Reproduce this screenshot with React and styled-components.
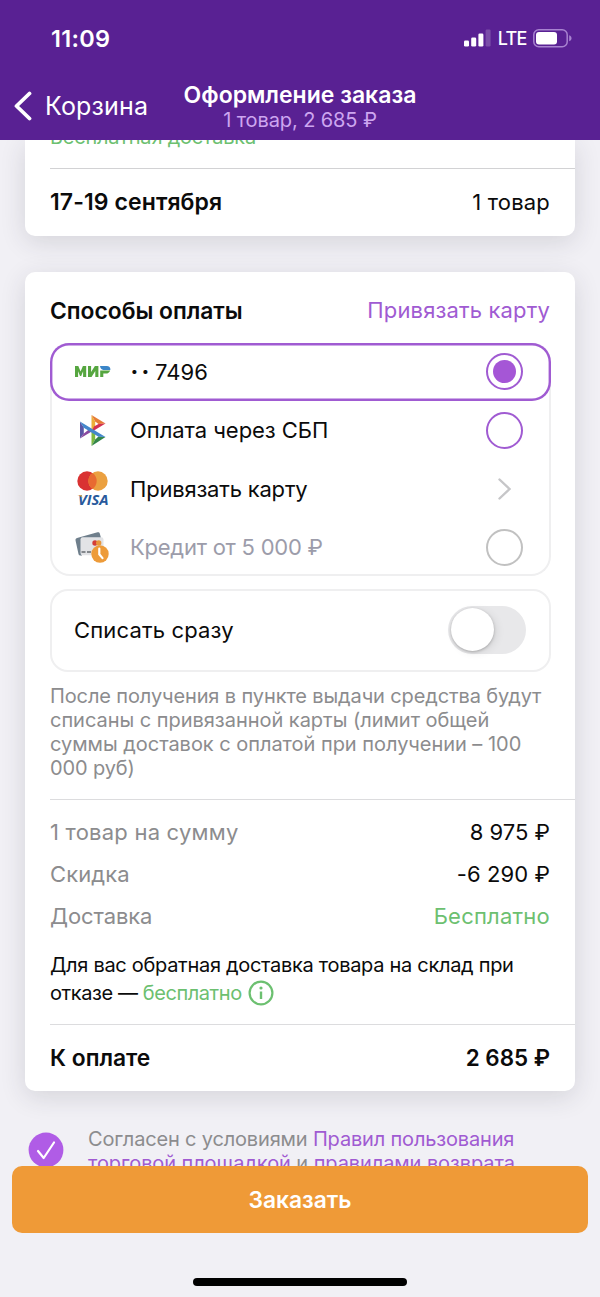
import styled, { createGlobalStyle } from "styled-components"
import { useState } from "react"

export default function App() {
    const [payment, setPayment] = useState("mir")
    const [chargeNow, setChargeNow] = useState(false)

    return (
        <Page>
            <GlobalStyle />
            <Header>
                <StatusBar>
                    <Text $size={23.5} $weight={600} $spacing={0.3}>11:09</Text>
                    <StatusIcons>
                        <SignalIcon />
                        <Text $size={18} $weight={500} $spacing={-0.8}>LTE</Text>
                        <BatteryIcon />
                    </StatusIcons>
                </StatusBar>
                <NavBar>
                    <BackButton>
                        <svg width="18" height="30" viewBox="0 0 18 30" fill="none">
                            <path d="M15.500 2.500 2.500 15l13 12.500" stroke="#fff" strokeWidth="3.800" strokeLinecap="round" strokeLinejoin="round" />
                        </svg>
                        <Text $size={25} $spacing={0.15}>Корзина</Text>
                    </BackButton>
                    <NavTitle>
                        <Text $size={23} $weight={600} $line={26}>Оформление заказа</Text>
                        <Text $size={20} $spacing={-0.1} $color="#cda6f0" $line={25}>1 товар, 2 685 ₽</Text>
                    </NavTitle>
                </NavBar>
            </Header>

            <Content>
                <DeliveryCard>
                    <FreeDelivery>
                        <Text $size={20} $spacing={-0.2} $color="#6cc070">Бесплатная доставка</Text>
                    </FreeDelivery>
                    <Divider $color="#d2d2d4" />
                    <DateRow>
                        <Text $size={23} $weight={600} $spacing={0.1}>17-19 сентября</Text>
                        <Text $size={22} $spacing={0.2}>1 товар</Text>
                    </DateRow>
                </DeliveryCard>

                <Card>
                    <CardHeader>
                        <Text $size={22.8} $weight={600}>Способы оплаты</Text>
                        <Text $size={22} $spacing={0.15} $color="#a05bd2">Привязать карту</Text>
                    </CardHeader>

                    <Options>
                        <Option $selected={payment === "mir"} onClick={() => setPayment("mir")}>
                            <OptionIcon><MirIcon /></OptionIcon>
                            <OptionName $size={22} $spacing={0.1}><Dots>··</Dots>7496</OptionName>
                            <Radio $color="#a05bd2">{payment === "mir" && <RadioDot />}</Radio>
                        </Option>
                        <Option $selected={payment === "sbp"} onClick={() => setPayment("sbp")}>
                            <OptionIcon><SbpIcon /></OptionIcon>
                            <OptionName $size={22} $spacing={-0.05}>Оплата через СБП</OptionName>
                            <Radio $color="#a05bd2">{payment === "sbp" && <RadioDot />}</Radio>
                        </Option>
                        <Option>
                            <OptionIcon><CardsIcon /></OptionIcon>
                            <OptionName $size={22} $spacing={-0.2}>Привязать карту</OptionName>
                            <Chevron />
                        </Option>
                        <Option>
                            <OptionIcon><CreditIcon /></OptionIcon>
                            <OptionName $size={22} $spacing={-0.24} $color="#9c9caa">Кредит от 5 000 ₽</OptionName>
                            <Radio $color="#c1c1c1" />
                        </Option>
                    </Options>

                    <ChargeBox>
                        <Text $size={22} $spacing={0.15}>Списать сразу</Text>
                        <Switch $on={chargeNow} onClick={() => setChargeNow(!chargeNow)}>
                            <Knob />
                        </Switch>
                    </ChargeBox>

                    <Note>
                        <Text $size={20} $line={24} $spacing={-0.12}>После получения в пункте выдачи средства будут</Text>
                        <Text $size={20} $line={24} $spacing={-0.03}>списаны с привязанной карты (лимит общей</Text>
                        <Text $size={20} $line={24} $spacing={-0.03}>суммы доставок с оплатой при получении – 100</Text>
                        <Text $size={20} $line={24} $spacing={-0.12}>000 руб)</Text>
                    </Note>

                    <Divider />

                    <Summary>
                        <SummaryRow>
                            <Text $size={22} $spacing={0.22} $color="#8c8c8e">1 товар на сумму</Text>
                            <Text $size={22}>8 975 ₽</Text>
                        </SummaryRow>
                        <SummaryRow>
                            <Text $size={22} $spacing={0.1} $color="#8c8c8e">Скидка</Text>
                            <Text $size={22} $spacing={0.1}>-6 290 ₽</Text>
                        </SummaryRow>
                        <SummaryRow>
                            <Text $size={22} $spacing={-0.1} $color="#8c8c8e">Доставка</Text>
                            <Text $size={22} $spacing={0.22} $color="#6cc070">Бесплатно</Text>
                        </SummaryRow>
                    </Summary>

                    <ReturnInfo>
                        <Text $size={20} $line={28} $spacing={-0.3}>Для вас обратная доставка товара на склад при</Text>
                        <ReturnLine>
                            <Text $size={20} $line={28} $spacing={-0.42}>отказе — <Free>бесплатно</Free></Text>
                            <InfoIcon />
                        </ReturnLine>
                    </ReturnInfo>

                    <Divider />

                    <TotalRow>
                        <Text $size={22.8} $weight={600}>К оплате</Text>
                        <Text $size={22.4} $weight={600}>2 685 ₽</Text>
                    </TotalRow>
                </Card>

                <Agreement>
                    <CheckIcon />
                    <AgreementText>
                        <Text $size={20} $line={24} $spacing={-0.17}>Согласен с условиями <a>Правил пользования</a></Text>
                        <Text $size={20} $line={24} $spacing={-0.09}><a>торговой площадкой</a> и <a>правилами возврата</a></Text>
                    </AgreementText>
                </Agreement>
            </Content>

            <Footer>
                <OrderButton>Заказать</OrderButton>
                <HomeIndicator />
            </Footer>
        </Page>
    )
}

function SignalIcon() {
    return (
        <svg width="27" height="18" viewBox="0 0 27 18" fill="#fff">
            <rect x="0" y="11.500" width="5" height="6" rx="1.300" />
            <rect x="7.200" y="8.500" width="5" height="9" rx="1.300" />
            <rect x="14.400" y="4.500" width="5" height="13" rx="1.300" />
            <rect x="21.600" y="0.500" width="5" height="17" rx="1.300" opacity="0.200" />
        </svg>
    )
}

function BatteryIcon() {
    return (
        <svg width="39" height="19" viewBox="0 0 39 19">
            <rect x="0.800" y="0.800" width="33.400" height="16.900" rx="5" fill="none" stroke="#a883d0" strokeWidth="1.500" />
            <rect x="3" y="3" width="21" height="12.500" rx="3" fill="#fff" />
            <path d="M36.200 6.300v6c1.600-.6 2.300-1.700 2.300-3s-.7-2.400-2.300-3z" fill="#a883d0" />
        </svg>
    )
}

function MirIcon() {
    return (
        <svg width="36" height="11" viewBox="0 0 36 11">
            <path d="M0 11V0h3.300l2.300 5.500L7.900 0h3.300v11H8.100V5.300L6.200 10H5L3.100 5.300V11z" fill="#56a640" />
            <path d="M13 11V0h3.100v6l3.800-6h3.500v11h-3.100V5l-3.800 6z" fill="#56a640" />
            <path d="M25.200 11V4.500h10c-.7 1.900-2.300 3.100-4.400 3.100h-2.500V11z" fill="#56a640" />
            <path d="M25 0h6.800c2.200 0 3.800 1.500 3.600 3.900h-7C26.600 3.900 25.200 2.200 25 0z" fill="#3b86c8" />
        </svg>
    )
}

function SbpIcon() {
    return (
        <svg width="26" height="31" viewBox="0 0 26 31">
            <path d="M11.500 0v17.500l3.700-4.500V6.500z" fill="#ecae38" />
            <path d="M11.500 0 25.500 8.500l-7 .5-3.300-2.500z" fill="#e67c35" />
            <path d="M25.500 8.500 11.500 17l2.500-5.500 4.500-2.500z" fill="#d23152" />
            <path d="M0 6.500v17l3.800-5V12.500z" fill="#5b57a6" />
            <path d="M0 23.500 12.500 16l-4-1.200-4.700 3.700z" fill="#8a4aa0" />
            <path d="M11.500 31V14l3.700 5.500v5z" fill="#7db941" />
            <path d="M11.500 31 25.500 22l-7-.5-3.300 3z" fill="#34864a" />
            <path d="M0 6.500 25.500 22l-7-.3L3.800 12.700z" fill="#4387cb" />
        </svg>
    )
}

function CardsIcon() {
    return (
        <svg width="34" height="36" viewBox="0 0 34 36">
            <circle cx="11" cy="10" r="9.700" fill="#d93232" />
            <circle cx="22" cy="10" r="9.700" fill="#eba040" />
            <path d="M16.500 2a9.700 9.700 0 0 1 0 16 9.700 9.700 0 0 1 0-16z" fill="#e86a31" />
            <text x="2" y="34" textLength="30.500" lengthAdjust="spacingAndGlyphs" fontFamily="Open Sans, sans-serif" fontSize="14" fontWeight="700" fontStyle="italic" fill="#285a9c">VISA</text>
            <path d="M1.200 24h3.200c1 0 1.500.5 1.600 1.200l.5 2C5.500 25.600 4 24.600 1.200 24z" fill="#dfa24a" />
        </svg>
    )
}

function CreditIcon() {
    return (
        <svg width="38" height="32" viewBox="0 0 38 32">
            <path d="M3 7 23.500 1.300c1.200-.3 2 .2 2.300 1.300L27 7H8v17.500l-2-.1c-.9-.1-1.300-.6-1.500-1.400L1.600 9.700C1.300 8.300 1.700 7.400 3 7z" fill="#6f7f8c" />
            <rect x="6.500" y="6.300" width="23" height="18" rx="2.200" fill="#e2e3e6" />
            <circle cx="21" cy="12" r="2.700" fill="#d43d38" />
            <circle cx="24.700" cy="12" r="2.700" fill="#e8963b" />
            <path d="M7.500 21h4M13 21h4" stroke="#84888d" strokeWidth="2.200" />
            <circle cx="26" cy="23" r="8.700" fill="#ed9b39" />
            <path d="M25.300 17.500v5.800l3.200 3.800" fill="none" stroke="#fff" strokeWidth="2.200" strokeLinecap="round" />
        </svg>
    )
}

function Chevron() {
    return (
        <ChevronBox>
            <svg width="13" height="22" viewBox="0 0 13 22" fill="none">
                <path d="M1.500 1.500 11.500 11l-10 9.500" stroke="#c6c6c8" strokeWidth="2.400" strokeLinecap="round" />
            </svg>
        </ChevronBox>
    )
}

function InfoIcon() {
    return (
        <svg width="26" height="26" viewBox="0 0 26 26" fill="none">
            <circle cx="13" cy="13" r="11.400" stroke="#6cc070" strokeWidth="2.200" />
            <circle cx="13" cy="8" r="1.600" fill="#6cc070" />
            <path d="M13 11.500v7.500" stroke="#6cc070" strokeWidth="2.400" />
        </svg>
    )
}

function CheckIcon() {
    return (
        <svg width="36" height="36" viewBox="0 0 36 36" fill="none">
            <circle cx="18" cy="18" r="17.400" fill="#b05ce6" />
            <path d="m10 19 5.700 7L26 10.500" stroke="#fff" strokeWidth="2.200" strokeLinecap="round" strokeLinejoin="round" />
        </svg>
    )
}

const GlobalStyle = createGlobalStyle`
    body {
        margin: 0;
        background-color: #f1f0f5;
    }
    * {
        box-sizing: border-box;
    }
    svg {
        display: block;
        flex-shrink: 0;
    }
`
const Page = styled.div`
    width: 600px;
    height: 1297px;
    display: flex;
    flex-direction: column;
    background-color: #f1f0f5;
    font-family: 'Inter', 'Liberation Sans', sans-serif;
    color: #0b0b0b;
`
const Text = styled.span`
    font-size: ${props => props.$size}px;
    font-weight: ${props => props.$weight || 400};
    letter-spacing: ${props => props.$spacing || 0}px;
    line-height: ${props => props.$line ? `${props.$line}px` : 'normal'};
    color: ${props => props.$color || 'inherit'};
    white-space: nowrap;
    a {
        color: #a05bd2;
    }
`
const Header = styled.header`
    height: 140px;
    flex-shrink: 0;
    background-color: #592193;
    color: #fff;
`
const StatusBar = styled.div`
    height: 76px;
    padding: 0 28px 0 51px;
    display: flex;
    align-items: center;
    justify-content: space-between;
`
const StatusIcons = styled.div`
    display: flex;
    align-items: center;
    gap: 6.5px;
`
const NavBar = styled.div`
    height: 64px;
    padding: 0 14px;
    display: grid;
    grid-template-columns: 150px 1fr 150px;
`
const BackButton = styled.div`
    height: 60px;
    display: flex;
    align-items: center;
    gap: 13px;
`
const NavTitle = styled.div`
    padding-top: 6px;
    display: flex;
    flex-direction: column;
    align-items: center;
`
const Content = styled.main`
    flex: 1;
    min-height: 0;
    padding: 0 25px;
    overflow: hidden;
`
const Card = styled.section`
    height: 819px;
    padding-left: 25px;
    border-radius: 10px;
    background-color: #fff;
    box-shadow: 0 6px 26px rgba(40, 40, 60, 0.14);
`
const DeliveryCard = styled(Card)`
    height: 96px;
    margin-bottom: 36px;
    border-radius: 0 0 10px 10px;
`
const FreeDelivery = styled.div`
    height: 28px;
    display: flex;
    align-items: flex-end;
    padding-bottom: 19px;
`
const Divider = styled.div`
    height: 1px;
    background-color: ${props => props.$color || '#dcdcde'};
`
const DateRow = styled.div`
    height: 66px;
    padding-right: 25px;
    display: flex;
    align-items: center;
    justify-content: space-between;
`
const CardHeader = styled.div`
    height: 70.5px;
    padding: 6px 25px 0 0;
    display: flex;
    align-items: center;
    justify-content: space-between;
`
const Options = styled.div`
    width: 501px;
    height: 233.5px;
    border-radius: 20px;
    box-shadow: inset 0 0 0 2px #efeff0;
`
const Option = styled.div`
    height: 58.5px;
    padding: 0 28px 0 24px;
    display: flex;
    align-items: center;
    border-radius: 19px;
    box-shadow: ${props => props.$selected ? 'inset 0 0 0 2.4px #a05bd2' : 'none'};
`
const OptionIcon = styled.div`
    width: 56px;
    display: flex;
    align-items: center;
    svg {
        margin-left: 18.5px;
        transform: translateX(-50%);
    }
`
const OptionName = styled(Text)`
    flex: 1;
`
const Dots = styled.span`
    margin: 0 2.5px 0 0.5px;
    font-weight: 800;
    letter-spacing: 3.2px;
`
const Radio = styled.div`
    width: 37px;
    height: 37px;
    border: 2.4px solid ${props => props.$color};
    border-radius: 50%;
    display: flex;
    align-items: center;
    justify-content: center;
`
const RadioDot = styled.div`
    width: 23px;
    height: 23px;
    border-radius: 50%;
    background-color: #a556d6;
`
const ChevronBox = styled.div`
    width: 37px;
    display: flex;
    justify-content: center;
`
const ChargeBox = styled.div`
    width: 501px;
    height: 83px;
    margin-top: 12.5px;
    margin-bottom: 0.5px;
    padding: 0 23px 1px 22px;
    display: flex;
    align-items: center;
    justify-content: space-between;
    border: 2px solid #efeff0;
    border-radius: 18px;
`
const Switch = styled.div`
    width: 78px;
    height: 48px;
    padding: 2.5px;
    display: flex;
    justify-content: ${props => props.$on ? 'flex-end' : 'flex-start'};
    border-radius: 24px;
    background-color: ${props => props.$on ? '#a05bd2' : '#e8e8ea'};
`
const Knob = styled.div`
    width: 43px;
    height: 43px;
    border-radius: 50%;
    background-color: #fff;
    box-shadow: 0 1px 3px rgba(0, 0, 0, 0.25), 3px 2px 8px rgba(0, 0, 0, 0.08);
`
const Note = styled.p`
    margin: 12px 0 0;
    height: 115px;
    display: flex;
    flex-direction: column;
    color: #8c8c8e;
`
const Summary = styled.div`
    padding: 12px 25px 0 0;
`
const SummaryRow = styled.div`
    height: 41.7px;
    display: flex;
    align-items: center;
    justify-content: space-between;
`
const ReturnInfo = styled.div`
    height: 87px;
    padding-top: 14px;
    display: flex;
    flex-direction: column;
`
const ReturnLine = styled.div`
    display: flex;
    align-items: center;
    gap: 6px;
`
const Free = styled.span`
    color: #6cc070;
`
const TotalRow = styled.div`
    height: 66px;
    padding-right: 25px;
    display: flex;
    align-items: center;
    justify-content: space-between;
`
const Agreement = styled.div`
    margin-top: 36px;
    padding-left: 3px;
    display: flex;
    gap: 24px;
    svg {
        margin-top: 5px;
    }
`
const AgreementText = styled.p`
    margin: 0;
    display: flex;
    flex-direction: column;
    color: #8c8c8e;
`
const Footer = styled.footer`
    height: 131px;
    flex-shrink: 0;
    padding: 0 12px 11px;
    display: flex;
    flex-direction: column;
    align-items: center;
    justify-content: space-between;
`
const OrderButton = styled.button`
    width: 100%;
    height: 67px;
    border: none;
    border-radius: 10px;
    background-color: #ef9a37;
    color: #fff;
    font-family: inherit;
    font-size: 22.8px;
    font-weight: 600;
`
const HomeIndicator = styled.div`
    width: 214px;
    height: 8px;
    border-radius: 4px;
    background-color: #000;
`
